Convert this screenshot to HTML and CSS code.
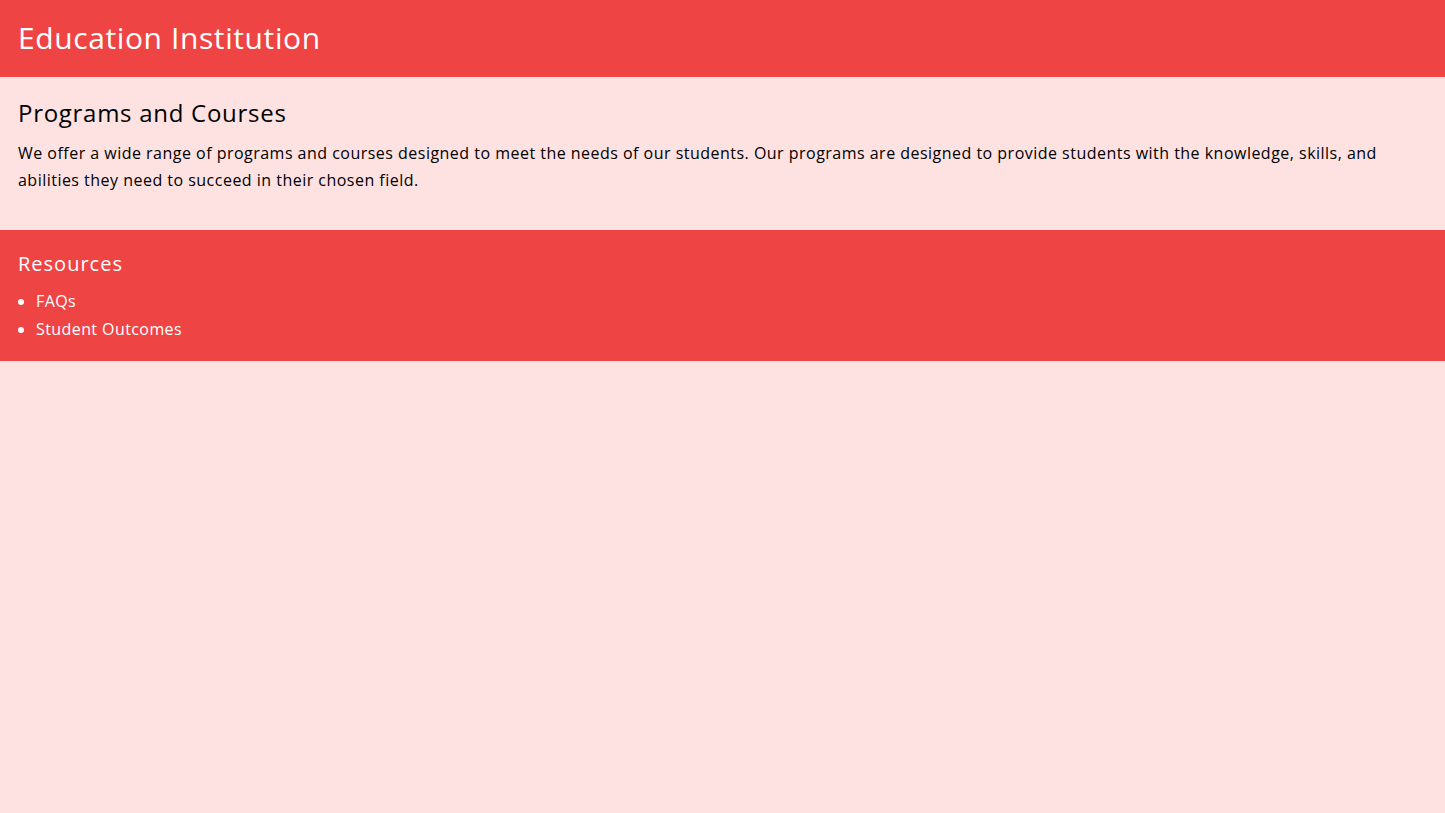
FILE: index.html
```html
<!DOCTYPE html>
<html>
<head>
<meta charset="utf-8">
<link rel="stylesheet" href="styles.css">
</head>
<body>
<header class="header">
  <h1 class="title">Education Institution</h1>
</header>
<main class="main">
  <section class="section">
    <h2 class="heading">Programs and Courses</h2>
    <p class="text">We offer a wide range of programs and courses designed to meet the needs of our students. Our programs are designed to provide students with the knowledge, skills, and abilities they need to succeed in their chosen field.</p>
  </section>
</main>
<footer class="footer">
  <h3 class="footer-title">Resources</h3>
  <ul class="links">
    <li><a class="link" href="#">FAQs</a></li>
    <li><a class="link" href="#">Student Outcomes</a></li>
  </ul>
</footer>
</body>
</html>
```

FILE: styles.css
```css
html, body {
  margin: 0;
  padding: 0;
}
body {
  background: #fee2e2;
  font-family: "Open Sans", "Liberation Sans", Arial, sans-serif;
  letter-spacing: 0.026em;
  color: #000;
  min-height: 813px;
}
.header {
  background: #ef4444;
  padding: 20px 18px 21px;
}
.title {
  margin: 0;
  font-size: 30px;
  line-height: 36px;
  font-weight: 400;
  letter-spacing: 0.02em;
  color: #fff;
}
.main {
  padding: 20px 18px 36px;
}
.heading {
  margin: 0 0 11px;
  font-size: 24px;
  line-height: 32px;
  font-weight: 400;
  letter-spacing: 0.03em;
}
.text {
  margin: 0;
  font-size: 16px;
  line-height: 27px;
  letter-spacing: 0.03em;
}
.footer {
  background: #ef4444;
  color: #fff;
  padding: 20px 18px 18px;
}
.footer-title {
  margin: 0 0 9px;
  font-size: 20px;
  line-height: 28px;
  font-weight: 400;
  letter-spacing: 0.05em;
}
.links {
  margin: 0;
  padding-left: 18px;
}
.links li {
  font-size: 16px;
  line-height: 28px;
}
.link {
  color: #fff;
  text-decoration: none;
}
```
